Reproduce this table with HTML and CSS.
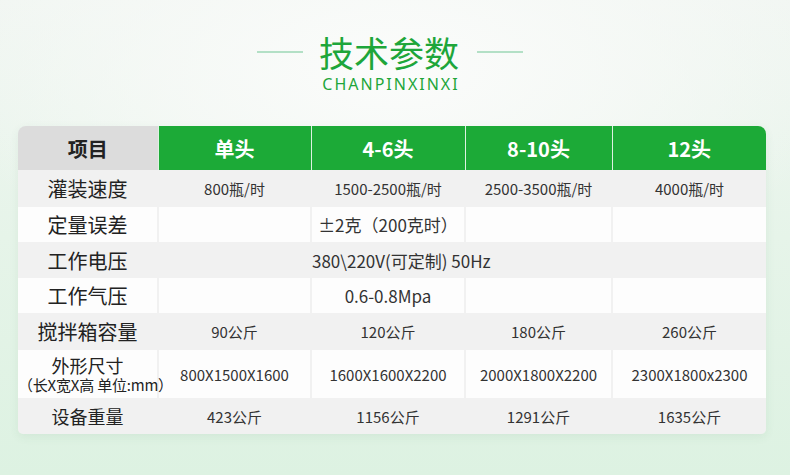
FILE: index.html
```html
<!DOCTYPE html>
<html lang="zh">
<head>
<meta charset="utf-8">
<title>技术参数</title>
<link rel="stylesheet" href="styles.css">
</head>
<body>
<div class="page">
  <header class="head">
    <div class="title-row">
      <span class="rule"></span>
      <h1 class="title">技术参数</h1>
      <span class="rule"></span>
    </div>
    <div class="subtitle">CHANPINXINXI</div>
  </header>
  <div class="table-wrap">
    <table class="spec">
      <colgroup>
        <col class="c1"><col class="c2"><col class="c3"><col class="c4"><col class="c5">
      </colgroup>
      <thead>
        <tr>
          <th class="th-first">项目</th>
          <th>单头</th>
          <th>4-6头</th>
          <th>8-10头</th>
          <th>12头</th>
        </tr>
      </thead>
      <tbody>
        <tr class="r1 gray">
          <td class="label">灌装速度</td>
          <td>800瓶/时</td>
          <td>1500-2500瓶/时</td>
          <td>2500-3500瓶/时</td>
          <td>4000瓶/时</td>
        </tr>
        <tr class="r2 white big">
          <td class="label">定量误差</td>
          <td></td>
          <td>±2克（200克时）</td>
          <td></td>
          <td></td>
        </tr>
        <tr class="r3 gray big">
          <td class="label">工作电压</td>
          <td></td>
          <td class="wide">380\220V(可定制) 50Hz</td>
          <td></td>
          <td></td>
        </tr>
        <tr class="r4 white big">
          <td class="label">工作气压</td>
          <td></td>
          <td>0.6-0.8Mpa</td>
          <td></td>
          <td></td>
        </tr>
        <tr class="r5 gray">
          <td class="label">搅拌箱容量</td>
          <td>90公斤</td>
          <td>120公斤</td>
          <td>180公斤</td>
          <td>260公斤</td>
        </tr>
        <tr class="r6 white">
          <td class="label small">
            <div class="lab-main">外形尺寸</div>
            <div class="lab-sub">（长X宽X高 单位:mm）</div>
          </td>
          <td>800X1500X1600</td>
          <td>1600X1600X2200</td>
          <td>2000X1800X2200</td>
          <td>2300X1800x2300</td>
        </tr>
        <tr class="r7 gray">
          <td class="label small">设备重量</td>
          <td>423公斤</td>
          <td>1156公斤</td>
          <td>1291公斤</td>
          <td>1635公斤</td>
        </tr>
      </tbody>
    </table>
  </div>
</div>
</body>
</html>
```

FILE: styles.css
```css
html, body {
  margin: 0;
  padding: 0;
}
body {
  width: 790px;
  height: 475px;
  overflow: hidden;
  font-family: "Noto Sans CJK SC", "Noto Sans", sans-serif;
  background:
    radial-gradient(ellipse 460px 220px at 50% 15%, rgba(251,252,251,1) 0%, rgba(248,250,248,0.7) 50%, rgba(246,248,246,0) 100%),
    linear-gradient(180deg, #f1f6f2 0%, #e6f4e9 50%, #ddf2e2 100%);
}
.page {
  width: 790px;
  height: 475px;
}
.head {
  display: flex;
  flex-direction: column;
  align-items: center;
  padding-top: 32px;
  padding-right: 10px;
}
.title-row {
  display: flex;
  align-items: center;
  height: 40px;
}
.rule {
  display: block;
  width: 46px;
  height: 2px;
  background: #b3e0c6;
}
.title {
  margin: 0 18px 0 16px;
  font-size: 35px;
  line-height: 40px;
  font-weight: 400;
  color: #1ea63a;
}
.subtitle {
  margin-top: 4px;
  font-family: "Noto Sans", "Open Sans", sans-serif;
  font-size: 16px;
  line-height: 17px;
  letter-spacing: 2px;
  padding-left: 2px;
  color: #1ea63a;
}
.table-wrap {
  margin: 33px 0 0 18px;
  width: 748px;
  border-radius: 8px 8px 5px 5px;
  overflow: hidden;
  box-shadow: 0 3px 10px rgba(60, 120, 80, 0.08);
}
.spec {
  width: 748px;
  table-layout: fixed;
  border-collapse: collapse;
}
.c1 { width: 140px; }
.c2 { width: 153px; }
.c3 { width: 154px; }
.c4 { width: 147px; }
.c5 { width: 154px; }
.spec th {
  height: 44px;
  padding: 0;
  background: #1caa37;
  color: #ffffff;
  font-size: 20px;
  font-weight: 700;
  text-align: center;
  border-left: 1px solid rgba(255,255,255,0.85);
}
.spec th.th-first {
  background: #dcdcdc;
  color: #222;
  border-left: none;
}
.spec td {
  padding: 0;
  text-align: center;
  font-size: 15px;
  color: #333;
  white-space: nowrap;
  border-left: 2px solid #f1f1f1;
}
.spec td:first-child {
  border-left: none;
}
.gray td { background: #f1f1f1; }
.white td { background: #fdfdfd; }
.r1 td { height: 37px; }
.r2 td { height: 35px; }
.r3 td { height: 36px; }
.r4 td { height: 35px; }
.r5 td { height: 37px; }
.r6 td { height: 48px; }
.r7 td { height: 36px; }
.big td { font-size: 17px; }
.spec td.label {
  font-size: 20px;
  color: #222;
}
.spec td.label.small {
  font-size: 18px;
}
.wide {
  overflow: visible;
}
.lab-main {
  font-size: 18px;
  line-height: 22px;
}
.lab-sub {
  font-size: 15px;
  line-height: 18px;
  letter-spacing: -0.2px;
}
```
